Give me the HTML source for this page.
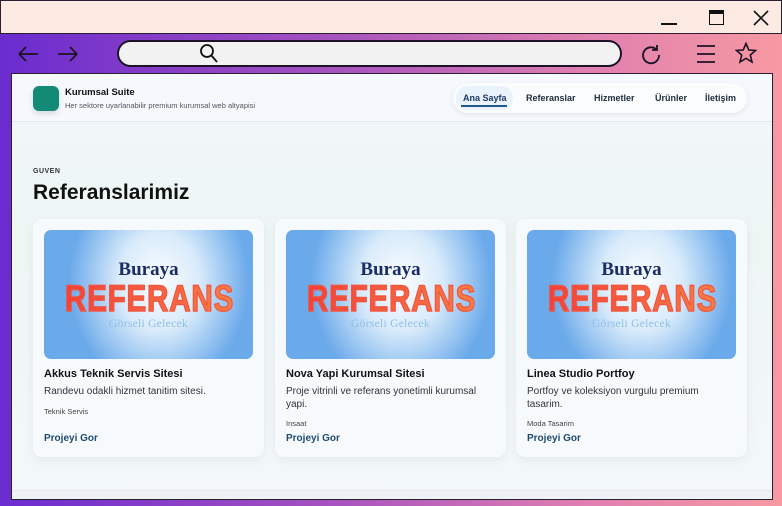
<!DOCTYPE html>
<html><head><meta charset="utf-8"><style>
*{margin:0;padding:0;box-sizing:border-box}
body{width:782px;height:506px;overflow:hidden;font-family:"Liberation Sans",sans-serif;position:relative;background:linear-gradient(90deg,#6a2ccf 0%,#a24fc0 40%,#e07fb0 75%,#f699a2 100%)}
.title{position:absolute;left:0;top:0;width:782px;height:34px;background:#fdebe3;border:1.5px solid #2a1f33;border-bottom:1.5px solid #2a1f33}
.url{position:absolute;left:117px;top:40px;width:505px;height:27px;border:2px solid #1c1426;border-radius:14px;background:#f2f2f2}
.content{position:absolute;left:11px;top:73px;width:762px;height:427px;border:1.5px solid #2a1f33;background:linear-gradient(180deg,#f1f7fb,#eef6f4 40%,#f3f7fb);overflow:hidden}
.hdr{position:absolute;left:0;top:0;width:100%;height:48px;background:#f5f9fd;border-bottom:1px solid #e2eaf0}
.logo{position:absolute;left:21px;top:12px;width:26px;height:25px;border-radius:6px;background:#138a76;box-shadow:0 3px 6px rgba(0,0,0,.12)}
.nav{position:absolute;left:441px;top:9px;width:294px;height:30px;border-radius:15px;background:#fafcfe;box-shadow:0 2px 6px rgba(0,0,0,.08);font-size:9px;font-weight:bold;color:#1f2a3a}
.nav span{position:absolute;top:10px}
.card{position:absolute;top:145px;width:231px;height:238px;background:#f7fafd;border-radius:9px;box-shadow:0 3px 10px rgba(0,0,0,.06)}
.img{position:absolute;left:11px;top:11px;width:209px;height:129px;border-radius:7px;background:radial-gradient(ellipse 90px 110px at 55% 40%,#fbfdff 0%,#d9ebfb 45%,#6aa9ea 100%);overflow:hidden}
.img .b{position:absolute;left:0;width:100%;text-align:center;top:29px;font-family:"Liberation Serif",serif;font-weight:bold;font-size:19px;color:#1b2e63}
.img .r{position:absolute;left:0;width:100%;text-align:center;top:48px;font-weight:bold;font-size:37px;letter-spacing:1px;transform:scaleX(.8);background:linear-gradient(90deg,#f2403a,#f77d45);-webkit-background-clip:text;color:transparent;-webkit-text-stroke:1.3px #f2553f}
.img .g{position:absolute;left:0;width:100%;text-align:center;top:88px;font-family:"Liberation Serif",serif;font-size:11.5px;color:#8fc0e6;letter-spacing:.3px}
.t{position:absolute;left:11px;top:149px;font-size:11px;font-weight:bold;color:#111}
.d{position:absolute;left:11px;top:166px;width:210px;font-size:10px;line-height:13px;color:#333}
.c{position:absolute;left:11px;font-size:7.5px;color:#444}
.p{position:absolute;left:11px;top:214px;font-size:10px;font-weight:bold;color:#1f4a6e}
</style></head><body>
<div class="title">
<div style="position:absolute;left:660px;top:22px;width:16px;height:1.5px;background:#111"></div>
<div style="position:absolute;left:708px;top:9px;width:15px;height:15px;border:1.5px solid #111;border-top:4px solid #111"></div>
<svg style="position:absolute;left:752px;top:9px" width="16" height="16"><path d="M1 1L15 15M15 1L1 15" stroke="#111" stroke-width="1.6"/></svg>
</div>
<svg style="position:absolute;left:16px;top:44px" width="64" height="20" fill="none" stroke="#1c1426" stroke-width="1.8"><path d="M3 10H22M3 10L10 3M3 10L10 17"/><path d="M42 10H61M61 10L54 3M61 10L54 17"/></svg>
<div class="url"></div>
<svg style="position:absolute;left:198px;top:43px" width="22" height="22" fill="none" stroke="#111" stroke-width="1.8"><circle cx="9" cy="8" r="6"/><path d="M13 12L19 19"/></svg>
<svg style="position:absolute;left:640px;top:43px" width="22" height="22" fill="none" stroke="#1c1426" stroke-width="1.8"><path d="M17 7A8 8 0 1 0 19 12"/><path d="M17 2V7H12"/></svg>
<svg style="position:absolute;left:695px;top:43px" width="22" height="22" stroke="#1c1426" stroke-width="1.8"><path d="M2 3H20M2 11H20M2 19H20"/></svg>
<svg style="position:absolute;left:735px;top:42px" width="22" height="22" fill="none" stroke="#1c1426" stroke-width="1.6"><path d="M11 1.5L13.8 8L20.5 8.5L15.3 13L17 20L11 16.3L5 20L6.7 13L1.5 8.5L8.2 8Z"/></svg>
<div class="content">
<div class="hdr">
<div class="logo"></div>
<div style="position:absolute;left:53px;top:13px;font-size:9.5px;font-weight:bold;color:#111">Kurumsal Suite</div>
<div style="position:absolute;left:53px;top:27px;font-size:7.5px;color:#555">Her sektore uyarlanabilir premium kurumsal web altyapisi</div>
<div class="nav">
<div style="position:absolute;left:3px;top:3px;width:57px;height:24px;border-radius:12px;background:#eaf2fb"></div>
<span style="left:10px;color:#1f3a66">Ana Sayfa</span>
<div style="position:absolute;left:8px;top:22px;width:46px;height:1.5px;background:#1f5a8a"></div>
<span style="left:73px">Referanslar</span>
<span style="left:141px">Hizmetler</span>
<span style="left:202px">Ürünler</span>
<span style="left:252px">İletişim</span>
</div>
</div>
<div style="position:absolute;left:21px;top:94px;font-size:7px;font-weight:bold;color:#333;letter-spacing:.5px">GUVEN</div>
<div style="position:absolute;left:21px;top:107px;font-size:21px;font-weight:bold;color:#111">Referanslarimiz</div>

<div class="card" style="left:21px"><div class="img"><div class="b">Buraya</div><div class="r">REFERANS</div><div class="g">Görseli Gelecek</div></div>
<div class="t">Akkus Teknik Servis Sitesi</div><div class="d">Randevu odakli hizmet tanitim sitesi.</div><div class="c" style="top:188px">Teknik Servis</div><div class="p">Projeyi Gor</div></div>

<div class="card" style="left:263px"><div class="img"><div class="b">Buraya</div><div class="r">REFERANS</div><div class="g">Görseli Gelecek</div></div>
<div class="t">Nova Yapi Kurumsal Sitesi</div><div class="d">Proje vitrinli ve referans yonetimli kurumsal yapi.</div><div class="c" style="top:200px">Insaat</div><div class="p">Projeyi Gor</div></div>

<div class="card" style="left:504px"><div class="img"><div class="b">Buraya</div><div class="r">REFERANS</div><div class="g">Görseli Gelecek</div></div>
<div class="t">Linea Studio Portfoy</div><div class="d">Portfoy ve koleksiyon vurgulu premium tasarim.</div><div class="c" style="top:200px">Moda Tasarim</div><div class="p">Projeyi Gor</div></div>

<div style="position:absolute;left:0;top:416px;width:100%;height:12px;background:#eef2f5;border-top:1px solid #e2e8ee"></div>
</div>
</body></html>
